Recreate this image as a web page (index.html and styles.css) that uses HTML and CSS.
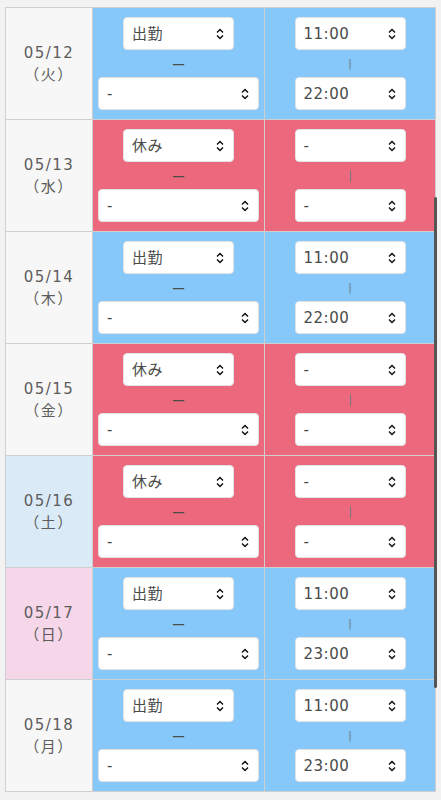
FILE: index.html
```html
<!DOCTYPE html>
<html lang="ja">
<head>
    <meta charset="UTF-8">
    <meta name="viewport" content="width=device-width, initial-scale=1.0">
    <title>シフト申請</title>
    <link rel="stylesheet" href="styles.css">
</head>
<body>
    <table class="shift-table">
        <tbody id="shift-body"></tbody>
    </table>
    <div class="scroll-thumb"></div>
    <script>
        const days = [
            { date: '05/12', dow: '火', type: '出勤', start: '11:00', end: '22:00' },
            { date: '05/13', dow: '水', type: '休み', start: '-', end: '-' },
            { date: '05/14', dow: '木', type: '出勤', start: '11:00', end: '22:00' },
            { date: '05/15', dow: '金', type: '休み', start: '-', end: '-' },
            { date: '05/16', dow: '土', type: '休み', start: '-', end: '-' },
            { date: '05/17', dow: '日', type: '出勤', start: '11:00', end: '23:00' },
            { date: '05/18', dow: '月', type: '出勤', start: '11:00', end: '23:00' }
        ];
        const arrows = '<svg class="arrows" width="8" height="12" viewBox="0 0 8 12"><path d="M1 4.5 L4 1.5 L7 4.5 M1 7.5 L4 10.5 L7 7.5" fill="none" stroke="#111" stroke-width="1.5"/></svg>';

        function select(value, options, cls) {
            const opts = options.map(o => `<option${o === value ? ' selected' : ''}>${o}</option>`).join('');
            return `<div class="select ${cls}"><select>${opts}</select>${arrows}</div>`;
        }

        const times = ['-', '11:00', '22:00', '23:00'];
        const body = document.getElementById('shift-body');
        days.forEach(d => {
            let dayClass = '';
            if (d.dow === '土') dayClass = ' sat';
            if (d.dow === '日') dayClass = ' sun';
            const state = d.type === '出勤' ? 'work' : 'off';
            const tr = document.createElement('tr');
            tr.innerHTML = `
                <th class="day${dayClass}">${d.date}<br>（${d.dow}）</th>
                <td class="${state}">
                    ${select(d.type, ['出勤', '休み'], 'narrow')}
                    <div class="sep dash">ー</div>
                    ${select('-', ['-'], 'wide')}
                </td>
                <td class="${state}">
                    ${select(d.start, times, 'narrow')}
                    <div class="sep bar">|</div>
                    ${select(d.end, times, 'narrow')}
                </td>`;
            body.appendChild(tr);
        });
    </script>
</body>
</html>
```

FILE: styles.css
```css
body {
    margin: 0;
    padding: 7px 5px 8px;
    background-color: #f2f2f2;
    font-family: "DejaVu Sans", "Noto Sans CJK JP", sans-serif;
    color: #555;
}
.shift-table {
    width: 431px;
    border-collapse: collapse;
    table-layout: fixed;
}
.shift-table th, .shift-table td {
    border: 1px solid #cfcfcf;
    padding: 9px 5px 9px;
    vertical-align: middle;
    text-align: center;
}
.shift-table tr {
    height: 112px;
}
.day {
    width: 76px;
    background-color: #f7f7f7;
    font-weight: normal;
    font-size: 15px;
    letter-spacing: 1.5px;
    line-height: 22px;
    color: #5c5c5c;
}
.day.sat {
    background-color: #dbeaf7;
}
.day.sun {
    background-color: #f6d6e9;
}
.shift-table td:nth-child(2) {
    width: 161px;
}
.work {
    background-color: #86c8f9;
}
.off {
    background-color: #ec687d;
}
.select {
    position: relative;
    margin: 0 auto;
    height: 33px;
}
.select.narrow {
    width: 111px;
}
.select.wide {
    width: 100%;
}
.select select {
    appearance: none;
    -webkit-appearance: none;
    width: 100%;
    height: 100%;
    border: 1px solid #e2e2e2;
    border-radius: 4px;
    background-color: #fff;
    font-family: "DejaVu Sans", "Noto Sans CJK JP", sans-serif;
    font-size: 15px;
    letter-spacing: 0.5px;
    color: #4a4a4a;
    padding: 0 8px;
    text-align: left;
}
.arrows {
    position: absolute;
    right: 10px;
    top: 11px;
    pointer-events: none;
}
.sep {
    height: 27px;
    line-height: 29px;
    color: #4a4a4a;
}
.dash {
    font-family: "Noto Sans CJK JP", sans-serif;
    font-size: 14px;
}
.bar {
    font-size: 11px;
    line-height: 27px;
    color: #6a7c8a;
}
.scroll-thumb {
    position: fixed;
    right: 4px;
    top: 197px;
    width: 3px;
    height: 491px;
    border-radius: 2px;
    background-color: #555;
}
```
